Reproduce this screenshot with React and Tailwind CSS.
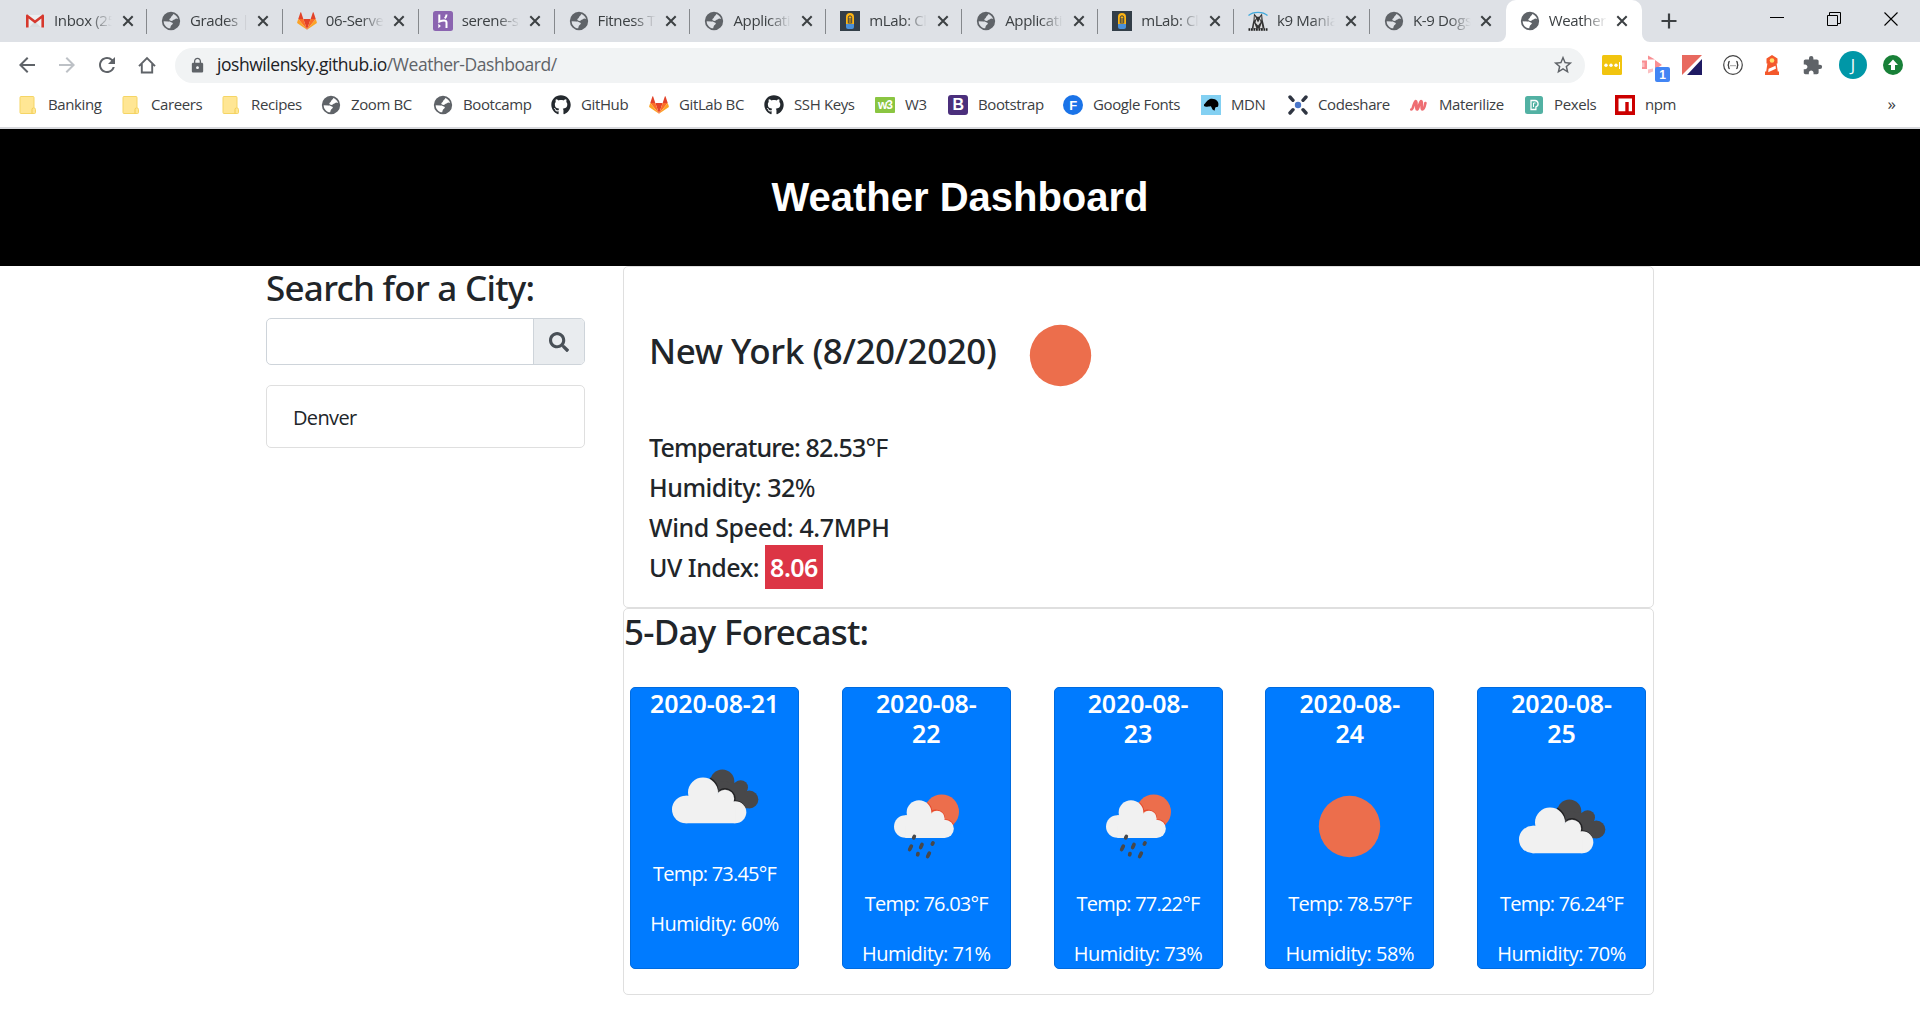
import React from "react";
import { MdStarBorder, MdLock, MdExtension, MdArrowBack, MdArrowForward, MdRefresh } from "react-icons/md";
import { FaGithub, FaSearch } from "react-icons/fa";

const Globe = () => (
  <svg viewBox="0 0 24 24" className="h-[22px] w-[22px] shrink-0">
    <path
      fill="#5f6368"
      fillRule="evenodd"
      d="M12 2a10 10 0 1 0 0 20a10 10 0 0 0 0-20Z M14.5 4.4C17 5.2 19 7.3 19.7 9.8L17.5 9.3C16.6 10.6 15 10 14.2 11.2C13.4 12.3 10.5 12 10.2 10.7C10 9.4 11.8 9.3 12 8C12.2 6.6 14.2 6.4 14.5 4.4Z M4 12.2L9.3 12.6C10.8 13.4 12.6 13 14 14.2C14.4 16 11.9 16.3 11.6 18L11.1 20C7 19.6 4 16.3 4 12.2Z"
    />
  </svg>
);

const Gmail = () => (
  <svg viewBox="0 0 20 20" className="h-5 w-5 shrink-0">
    <path fill="#eceff1" d="M2 4h16v12.500H2z" />
    <path fill="#d8dcdf" d="M4 16.500 10 10l6 6.500z" />
    <path fill="#d6382d" d="M1 16.500V4.800C1 3.700 2.200 3.200 3.100 3.900L10 9.200l6.900-5.300c.9-.7 2.100-.2 2.100.9v11.700h-2.600V7.600L10 12.500 3.600 7.600v8.900Z" />
  </svg>
);

const Gitlab = () => (
  <svg viewBox="0 0 24 24" className="h-5 w-5 shrink-0">
    <path fill="#e24329" d="M12 22.500 16.400 9.500H7.600Z" />
    <path fill="#fc6d26" d="M12 22.500 7.600 9.500H1.500ZM12 22.500 16.400 9.500h6.100Z" />
    <path fill="#fca326" d="M1.500 9.500.2 13.600c-.1.400 0 .800.300 1L12 22.500ZM22.500 9.500l1.300 4.100c.1.400 0 .800-.300 1L12 22.500Z" />
    <path fill="#e24329" d="M1.500 9.500h6.100L5 1.700c-.1-.4-.7-.4-.9 0ZM22.500 9.500h-6.100L19 1.700c.1-.4.700-.4.900 0Z" />
  </svg>
);

const Heroku = () => (
  <svg viewBox="0 0 20 20" className="h-5 w-5 shrink-0">
    <rect width="20" height="20" rx="2.500" fill="#8b64b0" />
    <path d="M6.300 3.500v7.200c3-1.300 7.200-2 7.200.800v5.500M13.500 3.500c0 1.600-.7 2.900-1.700 3.900" fill="none" stroke="#fff" strokeWidth="2" />
    <path fill="#fff" d="m5.300 12.800 2.600 2.200-2.600 2.200z" />
  </svg>
);

const Mlab = () => (
  <svg viewBox="0 0 20 20" className="h-5 w-5 shrink-0">
    <rect width="20" height="20" fill="#333e48" />
    <path fill="#fdb515" d="M6 13V6a4 4 0 0 1 8 0v7z" />
    <path fill="#4a90d9" d="M6 13h8v3a2 2 0 0 1-2 2H8a2 2 0 0 1-2-2z" />
    <path d="M8.300 12.500v-6a1.700 1.700 0 0 1 3.400 0v6M10 7v6" fill="none" stroke="#333e48" strokeWidth="1" />
  </svg>
);

const Dog = () => (
  <svg viewBox="0 0 20 20" className="h-5 w-5 shrink-0">
    <path d="M.5 4.500C5 .2 15 .2 19.500 4.500" fill="none" stroke="#3fa9dc" strokeWidth="1.300" />
    <path fill="#333" d="M5.500 9 6 2.500l3 3.300h2.200L14 2.500l.700 6.500 1.300 5.500.5 3H3.800l.7-4z" />
    <path fill="#dcdcdc" d="M6.700 4.800 8.200 7.500 6.600 9.500zM13.300 4.800 11.800 7.500l1.500 2zM8.300 8.200l1.700 3.200 1.900-3.200.7 3-2.500 3.300-2.600-2.800zM6.300 12l2 5H5.500zM13.700 12l.8 5h-2.700z" />
    <path d="M.5 18.500h19" stroke="#222" strokeWidth="2.500" strokeDasharray="1.800 .7" />
  </svg>
);

const Folder = () => (
  <svg viewBox="0 0 20 20" className="h-5 w-5 shrink-0">
    <path fill="#ffe694" stroke="#f5d565" strokeWidth="1" d="M3 1.500h12q1 0 1 1V13q1.500 0 1.500 1.500v3q0 1-1 1H3q-1 0-1-1v-15q0-1 1-1Z" />
    <path fill="none" stroke="#f0cb4f" strokeWidth="1" d="M14 18.500v-4q0-1.500 1.500-1.500" />
  </svg>
);

const Github = () => <FaGithub className="h-5 w-5 shrink-0 text-[#24292e]" />;

const W3 = () => (
  <span className="flex h-4 w-5 shrink-0 items-center justify-center rounded-[1px] bg-[#8ac541] font-['Liberation_Sans'] text-[12px] font-bold leading-none tracking-[-1px] text-white">
    w3
  </span>
);

const Bootstrap = () => (
  <span className="flex h-5 w-5 shrink-0 items-center justify-center rounded-[3px] bg-[#4b2f7c] font-['Liberation_Sans'] text-[16px] font-bold leading-none text-white">
    B
  </span>
);

const GFonts = () => (
  <span className="flex h-5 w-5 shrink-0 items-center justify-center rounded-full bg-[#1a73e8] font-['Liberation_Sans'] text-[13px] font-bold leading-none text-white">
    F
  </span>
);

const Mdn = () => (
  <svg viewBox="0 0 20 20" className="h-5 w-5 shrink-0">
    <rect width="20" height="20" fill="#83d0f2" />
    <path fill="#000" d="M3 9.500C4.500 8.500 5.500 5.500 8.500 4.300c2.500-1 6-.3 7.700 1.700 1.500 1.700 1.500 4 .8 5.500-.8.800-2 .5-2.700 1l-.8 3.300-2-1.300-1.300-2.800c-.7-1-1.700-.3-3-.2-1.500.2-3 .5-4.200-.5z" />
  </svg>
);

const Codeshare = () => (
  <svg viewBox="0 0 20 20" className="h-5 w-5 shrink-0">
    <path d="m2 2 3 3.300M18 2l-3 3.300M2 18l3-3.300M18 18l-3-3.300" stroke="#2f3542" strokeWidth="3.400" strokeLinecap="round" />
    <circle cx="10" cy="10" r="3.200" fill="#4a76c9" />
  </svg>
);

const Materialize = () => (
  <svg viewBox="0 0 20 20" className="h-5 w-5 shrink-0">
    <path d="M2.300 14.500c2 0 2.800-8.500 4.500-8.500 1.500 0-.3 8.500 1.200 8.500 1.700 0 2.500-8.500 4.200-8.500 1.500 0-.5 8.500 1.200 8.500 1.500 0 2.300-3 3-6.500" fill="none" stroke="#ee6e73" strokeWidth="2.700" strokeLinecap="round" />
  </svg>
);

const Pexels = () => (
  <svg viewBox="0 0 20 20" className="h-5 w-5 shrink-0">
    <rect x="1" y="1" width="18" height="18" rx="2.500" fill="#52b1a3" />
    <path d="M7 5.500h4a3.300 3.300 0 0 1 .9 6.400v2.600H7Z" fill="none" stroke="#fff" strokeWidth="1.300" />
    <path d="M9.500 12V8h2" fill="none" stroke="#fff" strokeWidth="1" />
  </svg>
);

const Npm = () => (
  <svg viewBox="0 0 20 20" className="h-5 w-5 shrink-0">
    <rect width="20" height="20" fill="#c00" />
    <path fill="#fff" d="M3.500 3.500h13.500v12.700h-3.300V7h-3.400v9.200H3.500z" />
  </svg>
);

const tabs = [
  [Gmail, "Inbox (25)"],
  [Globe, "Grades | T"],
  [Gitlab, "06-Server"],
  [Heroku, "serene-sh"],
  [Globe, "Fitness Tr"],
  [Globe, "Applicatio"],
  [Mlab, "mLab: Clo"],
  [Globe, "Applicatio"],
  [Mlab, "mLab: Clo"],
  [Dog, "k9 Mania"],
  [Globe, "K-9 Dogs"],
  [Globe, "Weather D"],
];

const bookmarks = [
  [Folder, "Banking", "w-[103px]"],
  [Folder, "Careers", "w-[100px]"],
  [Folder, "Recipes", "w-[100px]"],
  [Globe, "Zoom BC", "w-[112px]"],
  [Globe, "Bootcamp", "w-[118px]"],
  [Github, "GitHub", "w-[98px]"],
  [Gitlab, "GitLab BC", "w-[115px]"],
  [Github, "SSH Keys", "w-[111px]"],
  [W3, "W3", "w-[73px]"],
  [Bootstrap, "Bootstrap", "w-[115px]"],
  [GFonts, "Google Fonts", "w-[138px]"],
  [Mdn, "MDN", "w-[87px]"],
  [Codeshare, "Codeshare", "w-[121px]"],
  [Materialize, "Materilize", "w-[115px]"],
  [Pexels, "Pexels", "w-[91px]"],
  [Npm, "npm", "w-[60px]"],
];

function Close() {
  return (
    <svg viewBox="0 0 12 12" className="h-3 w-3 shrink-0">
      <path d="m1.300 1.300 9.400 9.400m0-9.400-9.400 9.400" stroke="#3c4043" strokeWidth="2" />
    </svg>
  );
}

function Tab({ Icon, label, active, divider }) {
  return (
    <div className={"relative flex h-[42px] w-[135.9px] shrink-0 items-center " + (active ? "rounded-t-[10px] bg-white" : "")}>
      {active && (
        <>
          <svg viewBox="0 0 8 8" className="absolute -left-2 bottom-0 h-2 w-2"><path fill="#fff" d="M8 0v8H0a8 8 0 0 0 8-8" /></svg>
          <svg viewBox="0 0 8 8" className="absolute -right-2 bottom-0 h-2 w-2"><path fill="#fff" d="M0 0v8h8a8 8 0 0 1-8-8" /></svg>
        </>
      )}
      <span className="ml-[13px] flex w-[22px] shrink-0 justify-center"><Icon /></span>
      <span className="-mt-px ml-[8px] w-[58px] shrink-0 overflow-hidden whitespace-nowrap text-[15px] tracking-[-0.36px] text-[#3c4043] [mask-image:linear-gradient(to_right,black_60%,transparent_100%)]">
        {label}
      </span>
      <span className="ml-[9.5px] flex"><Close /></span>
      {divider && <span className="absolute right-0 top-[9px] h-[25px] w-px bg-[#85888c]" />}
    </div>
  );
}

function TabStrip() {
  return (
    <div className="flex h-[42px] items-center bg-[#dee1e6] pl-[11px]">
      {tabs.map(([Icon, label], i) => (
        <Tab key={i} Icon={Icon} label={label} active={i === 11} divider={i < 10} />
      ))}
      <svg viewBox="0 0 16 16" className="ml-[19px] h-4 w-4"><path d="M8 .5v15M.5 8h15" stroke="#3c4043" strokeWidth="2.200" /></svg>
      <div className="ml-auto mr-[22px] flex -translate-y-[2px] items-center gap-[43px]">
        <svg viewBox="0 0 14 14" className="h-[14px] w-[14px]"><path d="M0 5.500h14" stroke="#000" /></svg>
        <svg viewBox="0 0 14 14" className="h-[14px] w-[14px]" fill="none" stroke="#000"><path d="M.5 3.500h10v10H.5zM2.500 3.500v-3h11v11h-3" /></svg>
        <svg viewBox="0 0 14 14" className="h-[14px] w-[14px]"><path d="m.5.500 13 13m0-13-13 13" stroke="#000" strokeWidth="1.100" /></svg>
      </div>
    </div>
  );
}

function Extensions() {
  return (
    <div className="flex items-center pl-[17px]">
      <svg viewBox="0 0 20 20" className="h-5 w-5">
        <rect width="20" height="20" rx="1.500" fill="#f1c40f" />
        <g fill="#fff"><circle cx="4" cy="10.200" r="1.700" /><circle cx="9" cy="10.200" r="1.700" /><circle cx="14" cy="10.200" r="1.700" /><path d="M17 7h1v7h-1z" /></g>
      </svg>
      <div className="relative ml-5 h-5 w-5">
        <svg viewBox="0 0 20 20" className="h-5 w-5">
          <path fill="#f98f93" d="M0 5.500h5v8.500H0zM6 .5l7 4H6zM13 5l7 5-7 4z" />
          <path fill="#fbc0c2" d="M0 7.500h2.500v4.500H0zM6 14.500l5-1v3l-5 2z" />
        </svg>
        <span className="absolute left-[13px] top-[12px] flex h-[15px] w-[15px] items-center justify-center rounded-[2px] bg-[#4285f4] font-['Liberation_Sans'] text-[12px] font-bold leading-none text-white">1</span>
      </div>
      <svg viewBox="0 0 20 20" className="ml-5 h-5 w-5">
        <path fill="#e8695f" d="M0 0h20L0 20z" /><path fill="#1f1a63" d="M20 4v16H5z" />
      </svg>
      <svg viewBox="0 0 20 20" className="ml-[21px] h-5 w-5" fill="none" stroke="#444">
        <circle cx="10" cy="10" r="9.300" strokeWidth="1.200" />
        <path strokeWidth="1.300" d="M6.800 6.500q-1.200 0-1.200 1.300v1q0 1.200-1 1.200 1 0 1 1.200v1q0 1.300 1.200 1.300M13.200 6.500q1.200 0 1.200 1.300v1q0 1.200 1 1.200-1 0-1 1.200v1q0 1.300-1.200 1.300" />
        <path strokeWidth="1" d="M7.500 10.700h5" strokeDasharray="1 1" />
      </svg>
      <svg viewBox="0 0 20 20" className="ml-[19px] h-5 w-5">
        <path fill="#f4582b" d="M10 0 15.500 3.500V8.500H14.600l1.200 8H17V20H3v-3.500h1.200l1.200-8H4.500V3.500z" />
        <circle cx="10" cy="5.500" r="2.300" fill="#ffdf6b" />
        <path fill="#fff" d="m6.600 13.700 6.900-3 .4 3.100-7.700 3.500z" />
      </svg>
      <MdExtension className="ml-[20px] h-[21px] w-[21px] text-[#5f6368]" />
      <span className="ml-4 flex h-7 w-7 items-center justify-center rounded-full bg-[#0097a7] text-[16px] leading-none text-white">J</span>
      <svg viewBox="0 0 20 20" className="ml-4 h-5 w-5">
        <circle cx="10" cy="10" r="10" fill="#188038" /><path fill="#fff" d="m10 4.500 5 5.500h-3v5H8v-5H5z" />
      </svg>
    </div>
  );
}

function Toolbar() {
  return (
    <div className="flex h-[46px] items-center bg-white">
      <div className="ml-[15px] flex w-[160px] items-center text-[#5f6368]">
        <MdArrowBack className="h-6 w-6" />
        <MdArrowForward className="ml-4 h-6 w-6 text-[#bdc1c6]" />
        <MdRefresh className="ml-4 h-6 w-6" />
        <svg viewBox="0 0 20 20" className="ml-[18px] h-5 w-5" fill="none" stroke="#5f6368" strokeWidth="1.900">
          <path d="M2 11.200 10 3l8 8.200M4.800 9v8.500h10.400V9" />
        </svg>
      </div>
      <div className="flex h-[35px] w-[1410px] items-center rounded-full bg-[#f1f3f4]">
        <MdLock className="ml-[14px] h-[17px] w-[17px] text-[#5f6368]" />
        <span className="ml-[11px] whitespace-nowrap text-[17.5px] leading-none tracking-[-0.45px] text-[#202124]">
          joshwilensky.github.io<span className="text-[#5f6368]">/Weather-Dashboard/</span>
        </span>
        <MdStarBorder className="ml-auto mr-[11px] h-[22px] w-[22px] text-[#5f6368]" />
      </div>
      <Extensions />
    </div>
  );
}

function Bookmarks() {
  return (
    <div className="flex h-[39px] items-center bg-white pb-[5px] pl-[18px]">
      {bookmarks.map(([Icon, label, width], i) => (
        <div key={i} className={"flex shrink-0 items-center whitespace-nowrap text-[15px] tracking-[-0.38px] text-[#3c4043] " + width}>
          <span className="flex w-5 shrink-0 justify-center"><Icon /></span>
          <span className="-mt-[2px] ml-[10px]">{label}</span>
        </div>
      ))}
      <span className="ml-auto mr-[24px] -mt-1 text-[17px] leading-none text-[#3c4043]">»</span>
    </div>
  );
}

const CloudsIcon = () => (
  <svg viewBox="-24 -79.5 375 375" className="h-[125px] w-[125px]">
    <g fill="#48484a">
      <circle cx="187" cy="63" r="36" />
      <circle cx="242" cy="81" r="22" />
      <circle cx="268" cy="117" r="27" />
      <path d="M170 60 242 70 268 117 262 144 200 130z" />
    </g>
    <g fill="none" stroke="#222224" strokeWidth="4">
      <path d="M150 53A47 47 0 0 1 174 88" />
      <path d="M178 90A30 30 0 0 1 224 121A35 35 0 0 1 255 141" />
    </g>
    <g fill="#f1f1f1">
      <circle cx="129" cy="96" r="45" />
      <circle cx="77" cy="147" r="41" />
      <circle cx="195" cy="115" r="27.500" />
      <circle cx="226" cy="155" r="33" />
      <path d="M77 106h50l68 5 31 30v47H77z" />
    </g>
  </svg>
);

const RainIcon = () => (
  <svg viewBox="612 10.5 375 375" className="h-[125px] w-[125px]">
    <circle cx="845" cy="154" r="52" fill="#ec6e4c" />
    <path d="M872 214 884 190 905 180v40z" fill="#007bff" />
    <path d="M801 126A39 39 0 0 1 815 152A26 26 0 0 1 853 178A29 29 0 0 1 880 193" fill="none" stroke="#e6492c" strokeWidth="4" />
    <g fill="#f1f1f1">
      <circle cx="777" cy="156" r="37" />
      <circle cx="736" cy="198" r="34" />
      <circle cx="831" cy="174" r="23" />
      <circle cx="854" cy="205" r="27.500" />
      <path d="M736 164h40l55 5 23 25v38.500H736z" />
    </g>
    <path d="m763 228-2 4m-7 25-5 10m37-15-4 9m37-14-2 4m-43 28-1 4m35-5-5 10" fill="none" stroke="#48484a" strokeWidth="11" strokeLinecap="round" />
  </svg>
);

const SunIcon = () => (
  <svg viewBox="0 0 125 125" className="h-[125px] w-[125px]">
    <circle cx="62.500" cy="62.500" r="30.700" fill="#ec6e4c" />
  </svg>
);

const forecast = [
  ["2020-08-21", "w-[140px]", CloudsIcon, "73.45", 60],
  ["2020-08-22", "w-[120px]", RainIcon, "76.03", 71],
  ["2020-08-23", "w-[120px]", RainIcon, "77.22", 73],
  ["2020-08-24", "w-[120px]", SunIcon, "78.57", 58],
  ["2020-08-25", "w-[120px]", CloudsIcon, "76.24", 70],
];

function Forecast() {
  return (
    <section className="h-[387px] rounded-[5px] border border-[#dfdfdf]">
      <h3 className="mt-[2px] font-['Noto_Sans'] text-[35px] font-medium leading-[42px] tracking-[-0.75px]">5-Day Forecast:</h3>
      <div className="ml-[6px] mt-[34px] flex w-[1016px] justify-between">
        {forecast.map(([date, dateWidth, Icon, temp, humidity]) => (
          <article key={date} className="flex h-[282px] w-[169px] flex-col items-center rounded-[5px] border border-[#006bdf] bg-[#007bff] text-center text-white">
            <h5 className={"font-['Noto_Sans'] text-[25px] font-semibold leading-[30px] tracking-[-0.15px] " + dateWidth}>{date}</h5>
            <div className="mt-[16px]"><Icon /></div>
            <p className="whitespace-nowrap text-[20px] leading-[30px] tracking-[-0.8px]">Temp: {temp}°F</p>
            <p className="mt-5 whitespace-nowrap text-[20px] leading-[30px] tracking-[-0.5px]">Humidity: {humidity}%</p>
          </article>
        ))}
      </div>
    </section>
  );
}

function Current() {
  return (
    <section className="h-[342px] rounded-[5px] border border-[#dfdfdf] pl-[25px]">
      <div className="mt-[26px] flex h-[125px] items-center gap-[2px]">
        <h3 className="-mt-[10px] whitespace-nowrap font-['Noto_Sans'] text-[35px] font-medium leading-[42px] tracking-[-0.45px]">New York (8/20/2020)</h3>
        <SunIcon />
      </div>
      <div className="mt-[9px] font-['Noto_Sans'] text-[25px] font-medium leading-[40px]">
        <p className="tracking-[-0.84px]">Temperature: 82.53<span className="font-normal">°F</span></p>
        <p className="tracking-[-0.5px]">Humidity: 32<span className="font-normal">%</span></p>
        <p className="tracking-[-0.36px]">Wind Speed: 4.7MPH</p>
        <p className="tracking-[-0.5px]">UV Index: <span className="bg-[#dc3545] p-[5px] font-semibold text-white">8.06</span></p>
      </div>
    </section>
  );
}

export default function App() {
  return (
    <div className="min-h-[1030px] w-[1920px] overflow-hidden bg-white font-['Open_Sans',sans-serif] text-[#212529]">
      <TabStrip />
      <Toolbar />
      <Bookmarks />
      <div className="h-[2px] bg-[#d8d9dd]" />
      <header className="flex h-[137px] items-center justify-center bg-black pb-px">
        <h1 className="font-['Liberation_Sans',sans-serif] text-[40px] font-bold leading-[60px] text-white">Weather Dashboard</h1>
      </header>
      <main className="flex pl-[266px]">
        <aside className="w-[319px] pt-px">
          <h3 className="whitespace-nowrap font-['Noto_Sans'] text-[35px] font-medium leading-[42px] tracking-[-0.74px]">Search for a City:</h3>
          <div className="mt-[9px] flex h-[47px] overflow-hidden rounded-[5px] border border-[#ced4da]">
            <div className="flex-1" />
            <div className="flex w-[51px] items-center justify-center border-l border-[#ced4da] bg-[#e9ecef]">
              <FaSearch className="h-5 w-5 text-[#495057]" />
            </div>
          </div>
          <div className="mt-5 flex h-[63px] items-center rounded-[5px] border border-[#dfdfdf] pl-[26px] pt-[2px] text-[20px] leading-[30px] tracking-[-0.65px]">Denver</div>
        </aside>
        <div className="ml-[38px] w-[1031px]">
          <Current />
          <Forecast />
        </div>
      </main>
    </div>
  );
}
